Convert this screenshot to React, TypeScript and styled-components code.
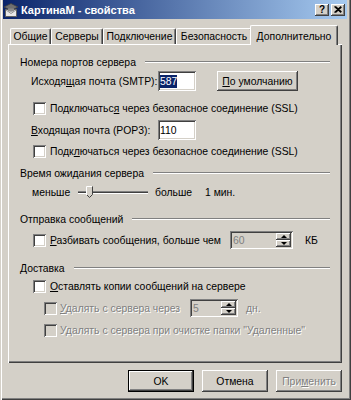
import React from "react";
import styled, { createGlobalStyle } from "styled-components";

const FACE = "#D4D0C8";
const SHADOW = "#808080";
const DARK = "#404040";

const raised = `inset -1px -1px ${DARK}, inset 1px 1px #fff, inset -2px -2px ${SHADOW}`;
const sunken = `inset 1px 1px ${SHADOW}, inset -1px -1px #fff, inset 2px 2px ${DARK}, inset -2px -2px ${FACE}`;

const GlobalStyle = createGlobalStyle`
  html, body { margin: 0; padding: 0; background: ${FACE}; }
  body { font-family: "Liberation Sans", Arial, sans-serif; font-size: 10.4px; color: #000; }
  * { box-sizing: border-box; }
  u { text-decoration: underline; text-underline-offset: 1px; }
`;

const Window = styled.div`
  width: 351px;
  height: 400px;
  background: ${FACE};
  padding: 0 4px 3px 3px;
  display: flex;
  flex-direction: column;
  overflow: hidden;
  box-shadow: inset 1px 0 ${FACE}, inset 2px 0 #fff, inset -1px -1px ${DARK}, inset -2px -2px ${SHADOW};
`;

const TitleBar = styled.div`
  flex: none;
  height: 19px;
  display: flex;
  align-items: center;
  padding: 0 2px 0 0;
  background: linear-gradient(to right, #0a246a, #a6caf0);
  color: #fff;
  font-weight: bold;
  font-size: 11px;
`;

const TitleIcon = styled.svg`
  flex: none;
  margin-right: 2px;
`;

const TitleText = styled.span`
  flex: 1;
  white-space: nowrap;
`;

const CaptionButton = styled.div<{ $gap?: number }>`
  width: 14px;
  height: 12px;
  margin-left: ${(p) => p.$gap ?? 0}px;
  background: ${FACE};
  box-shadow: ${raised};
  display: flex;
  align-items: center;
  justify-content: center;
  color: #000;
  font-weight: bold;
  font-size: 10px;
  line-height: 1;
`;

const Body = styled.div`
  flex: 1;
  display: flex;
  flex-direction: column;
  padding: 6px 5px 0 5px;
`;

const TabStrip = styled.div`
  flex: none;
  height: 19px;
  display: flex;
  align-items: flex-start;
  padding-left: 2px;
`;

const Tab = styled.div<{ $w: number; $active?: boolean }>`
  flex: none;
  position: relative;
  z-index: ${(p) => (p.$active ? 1 : 0)};
  width: ${(p) => p.$w}px;
  height: ${(p) => (p.$active ? 20 : 16)}px;
  margin: ${(p) => (p.$active ? "0 -2px 0 -2px" : "3px 0 0 0")};
  padding-top: ${(p) => (p.$active ? 1 : 0)}px;
  background: ${FACE};
  border-top: 1px solid #fff;
  border-left: 1px solid #fff;
  border-right: 1px solid ${DARK};
  box-shadow: inset -1px 0 ${SHADOW};
  border-radius: 2px 2px 0 0;
  display: flex;
  align-items: center;
  justify-content: center;
  white-space: nowrap;
  overflow: hidden;
`;

const Panel = styled.div`
  flex: none;
  height: 319px;
  border-top: 1px solid #fff;
  border-left: 1px solid #fff;
  box-shadow: inset -1px -1px ${DARK}, inset -2px -2px ${SHADOW};
  padding: 0 12px 0 11px;
  display: flex;
  flex-direction: column;
`;

const GroupHeader = styled.div<{ $mt: number }>`
  flex: none;
  display: flex;
  align-items: center;
  height: 14px;
  margin-top: ${(p) => p.$mt}px;
  white-space: nowrap;
  &::after {
    content: "";
    flex: 1;
    height: 0;
    border-top: 1px solid ${SHADOW};
    border-bottom: 1px solid #fff;
    margin-left: 9px;
  }
`;

const Row = styled.div<{ $mt: number; $h: number; $indent: number }>`
  flex: none;
  display: flex;
  align-items: center;
  height: ${(p) => p.$h}px;
  margin-top: ${(p) => p.$mt}px;
  padding-left: ${(p) => p.$indent}px;
  white-space: nowrap;
`;

const Label = styled.span<{ $w?: number; $ml?: number; $disabled?: boolean }>`
  flex: none;
  ${(p) => (p.$w ? `width: ${p.$w}px;` : "")}
  margin-left: ${(p) => p.$ml ?? 0}px;
  color: ${(p) => (p.$disabled ? SHADOW : "#000")};
  text-shadow: ${(p) => (p.$disabled ? "1px 1px 0 #fff" : "none")};
`;

const TextBox = styled.div<{ $w: number }>`
  flex: none;
  width: ${(p) => p.$w}px;
  height: 20px;
  background: #fff;
  box-shadow: ${sunken};
  display: flex;
  align-items: center;
  padding-left: 2px;
`;

const Selected = styled.span`
  background: #0a246a;
  color: #fff;
  line-height: 13px;
`;

const PushButton = styled.div<{ $w: number; $h: number; $ml?: number; $default?: boolean; $disabled?: boolean }>`
  flex: none;
  width: ${(p) => p.$w}px;
  height: ${(p) => p.$h}px;
  margin-left: ${(p) => p.$ml ?? 0}px;
  background: ${FACE};
  box-shadow: ${(p) =>
    p.$default
      ? `inset 0 0 0 1px #000, inset -2px -2px ${DARK}, inset 2px 2px #fff, inset -3px -3px ${SHADOW}`
      : raised};
  display: flex;
  align-items: center;
  justify-content: center;
  color: ${(p) => (p.$disabled ? SHADOW : "#000")};
  text-shadow: ${(p) => (p.$disabled ? "1px 1px 0 #fff" : "none")};
`;

const CheckBox = styled.div<{ $disabled?: boolean }>`
  flex: none;
  width: 13px;
  height: 13px;
  background: ${(p) => (p.$disabled ? FACE : "#fff")};
  box-shadow: ${sunken};
`;

const SliderWrap = styled.div`
  flex: none;
  position: relative;
  width: 70px;
  height: 18px;
  display: flex;
  align-items: center;
`;

const Track = styled.div`
  width: 100%;
  height: 3px;
  border-top: 1px solid ${SHADOW};
  border-bottom: 1px solid #fff;
  background: ${DARK};
`;

const Thumb = styled.svg`
  position: absolute;
  left: 8px;
  top: 3px;
`;

const Spin = styled.div<{ $w: number; $ml?: number }>`
  flex: none;
  width: ${(p) => p.$w}px;
  height: 18px;
  margin-left: ${(p) => p.$ml ?? 0}px;
  background: ${FACE};
  box-shadow: ${sunken};
  padding: 2px;
  display: flex;
`;

const SpinValue = styled.span`
  flex: 1;
  color: ${SHADOW};
  padding-left: 1px;
  display: flex;
  align-items: center;
`;

const SpinButtons = styled.div`
  width: 15px;
  display: flex;
  flex-direction: column;
`;

const SpinArrow = styled.div<{ $down?: boolean }>`
  flex: 1;
  background: ${FACE};
  box-shadow: ${raised};
  display: flex;
  align-items: center;
  justify-content: center;
  &::after {
    content: "";
    width: 0;
    height: 0;
    border-left: 3px solid transparent;
    border-right: 3px solid transparent;
    ${(p) => (p.$down ? `border-top: 3px solid #000;` : `border-bottom: 3px solid #000;`)}
  }
`;

const Footer = styled.div`
  flex: none;
  display: flex;
  justify-content: flex-end;
  gap: 8px;
  margin-top: 7px;
`;

export default function App() {
  return (
    <>
      <GlobalStyle />
      <Window>
        <TitleBar>
          <TitleIcon width="16" height="16" viewBox="0 0 16 16">
            <path d="M2.5 7.5 H13.5 V14.5 H2.5 Z" fill="#e8e8e8" stroke="#606060" />
            <path d="M3 8 L8 11.5 L13 8" fill="none" stroke="#909090" />
            <path d="M1 5 L8 1.5 L15 5 L8 8.5 Z" fill="#707070" stroke="#404040" strokeWidth="0.8" />
            <path d="M5 6.5 V9 Q8 10.5 11 9 V6.5" fill="#8a8a8a" />
          </TitleIcon>
          <TitleText>КартинаМ - свойства</TitleText>
          <CaptionButton>?</CaptionButton>
          <CaptionButton $gap={2}>
            <svg width="8" height="7" viewBox="0 0 8 7">
              <path d="M0.5 0.5 L7 6.5 M1.5 0.5 L7.5 6 M7 0.5 L0.5 6.5 M7.5 1 L1.5 6.5" stroke="#000" strokeWidth="1.1" />
            </svg>
          </CaptionButton>
        </TitleBar>
        <Body>
          <TabStrip>
            <Tab $w={41}>Общие</Tab>
            <Tab $w={52}>Серверы</Tab>
            <Tab $w={73}>Подключение</Tab>
            <Tab $w={76}>Безопасность</Tab>
            <Tab $w={88} $active>Дополнительно</Tab>
          </TabStrip>
          <Panel>
            <GroupHeader $mt={10}>Номера портов сервера</GroupHeader>
            <Row $mt={2} $h={20} $indent={11}>
              <Label $w={127}>
                Исходя<u>щ</u>ая почта (SMTP):
              </Label>
              <TextBox $w={38}>
                <Selected>587</Selected>
              </TextBox>
              <PushButton $w={81} $h={20} $ml={21}>
                <span>
                  <u>П</u>о умолчанию
                </span>
              </PushButton>
            </Row>
            <Row $mt={10} $h={14} $indent={13}>
              <CheckBox />
              <Label $ml={4}>
                Подключатьс<u>я</u> через безопасное соединение (SSL)
              </Label>
            </Row>
            <Row $mt={5} $h={20} $indent={11}>
              <Label $w={127}>
                <u>В</u>ходящая почта (POP3):
              </Label>
              <TextBox $w={38}>110</TextBox>
            </Row>
            <Row $mt={4} $h={14} $indent={13}>
              <CheckBox />
              <Label $ml={4}>
                Подк<u>л</u>ючаться через безопасное соединение (SSL)
              </Label>
            </Row>
            <GroupHeader $mt={8}>Время ожидания сервера</GroupHeader>
            <Row $mt={3} $h={18} $indent={12}>
              <Label $w={46}>меньше</Label>
              <SliderWrap>
                <Track />
                <Thumb width="7" height="12" viewBox="0 0 7 12">
                  <path d="M0.5 0.5 H6.5 V8.5 L3.5 11.5 L0.5 8.5 Z" fill={FACE} />
                  <path d="M0.5 9 V0.5 H6" stroke="#fff" fill="none" />
                  <path d="M6.5 0.5 V8.5 L3.5 11.5 L1 9" stroke={DARK} fill="none" />
                </Thumb>
              </SliderWrap>
              <Label $ml={7} $w={50}>
                больше
              </Label>
              <Label>1 мин.</Label>
            </Row>
            <GroupHeader $mt={11}>Отправка сообщений</GroupHeader>
            <Row $mt={4} $h={20} $indent={13}>
              <CheckBox />
              <Label $ml={4} $w={180}>
                <u>Р</u>азбивать сообщения, больше чем
              </Label>
              <Spin $w={63}>
                <SpinValue>60</SpinValue>
                <SpinButtons>
                  <SpinArrow />
                  <SpinArrow $down />
                </SpinButtons>
              </Spin>
              <Label $ml={12}>КБ</Label>
            </Row>
            <GroupHeader $mt={11}>Доставка</GroupHeader>
            <Row $mt={4} $h={14} $indent={13}>
              <CheckBox />
              <Label $ml={4}>
                <u>О</u>ставлять копии сообщений на сервере
              </Label>
            </Row>
            <Row $mt={5} $h={20} $indent={24}>
              <CheckBox $disabled />
              <Label $ml={3} $w={130} $disabled>
                <u>У</u>далять с сервера через
              </Label>
              <Spin $w={48}>
                <SpinValue>5</SpinValue>
                <SpinButtons>
                  <SpinArrow />
                  <SpinArrow $down />
                </SpinButtons>
              </Spin>
              <Label $ml={8} $disabled>
                дн.
              </Label>
            </Row>
            <Row $mt={5} $h={14} $indent={24}>
              <CheckBox $disabled />
              <Label $ml={3} $disabled>
                У<u>д</u>алять с сервера при очистке папки "Удаленные"
              </Label>
            </Row>
          </Panel>
          <Footer>
            <PushButton $w={66} $h={22} $default>
              OK
            </PushButton>
            <PushButton $w={66} $h={22}>
              Отмена
            </PushButton>
            <PushButton $w={66} $h={22} $disabled>
              <span>
                При<u>м</u>енить
              </span>
            </PushButton>
          </Footer>
        </Body>
      </Window>
    </>
  );
}
